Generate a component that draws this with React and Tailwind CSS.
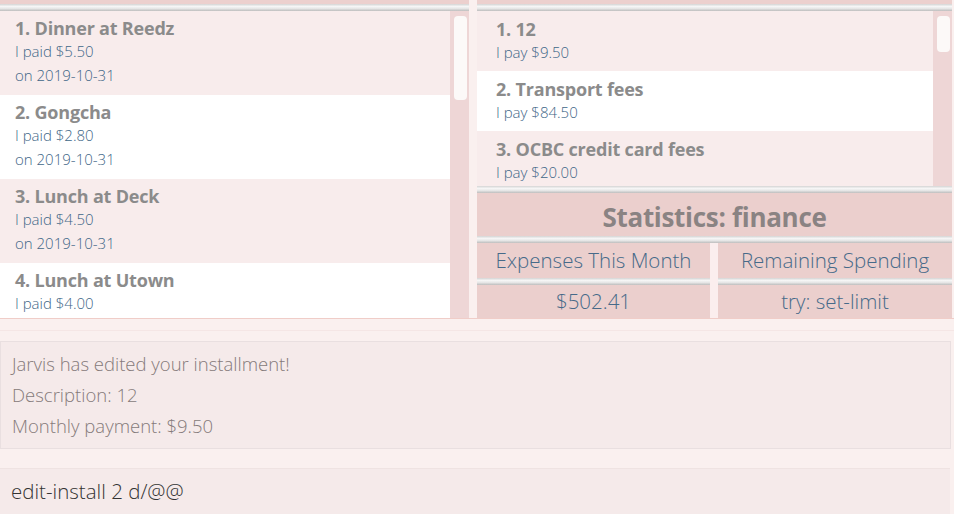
import React from "react";

const font = { fontFamily: '"Open Sans", "Noto Sans", sans-serif' };

function Sep() {
  return <div className="h-[7px] shrink-0 bg-[linear-gradient(to_bottom,#d4d4d4_0%,#f6f6f6_35%,#e6e6e6_65%,#bdbdbd_100%)]" />;
}

function LeftItem({ n, title, paid, date, white }) {
  return (
    <div className={`h-[84px] shrink-0 pl-[15px] pt-[6px] ${white ? "bg-white" : "bg-[#f8ecec]"}`}>
      <div className="text-[18px] leading-[22px] font-bold text-[#8b8b8b] tracking-[-0.2px]">{n}. {title}</div>
      <div className="text-[15px] leading-[24px] font-light text-[#3f6788]">I paid ${paid}</div>
      {date && <div className="text-[15px] leading-[24px] font-light text-[#3f6788]">on {date}</div>}
    </div>
  );
}

function RightItem({ n, title, pay, white }) {
  return (
    <div className={`h-[60px] shrink-0 pl-[19px] pt-[7px] ${white ? "bg-white" : "bg-[#f8ecec]"}`}>
      <div className="text-[18px] leading-[22px] font-bold text-[#8b8b8b] tracking-[-0.2px]">{n}. {title}</div>
      <div className="text-[15px] leading-[24px] font-light text-[#3f6788]">I pay ${pay}</div>
    </div>
  );
}

function Scrollbar({ thumbH }) {
  return (
    <div className="w-[19px] shrink-0 bg-[#eed6d6] pt-[5px] pl-[4px] pr-[2px]">
      <div className="bg-[#fcf9f8] rounded-[4px]" style={{ height: thumbH }} />
    </div>
  );
}

export default function App() {
  return (
    <div className="w-[954px] h-[514px] bg-[#faf0ef] flex flex-col overflow-hidden" style={font}>
      <div className="h-[319px] shrink-0 flex border-b border-[#f0cdc8]">
        {/* left panel */}
        <div className="w-[469px] shrink-0 flex flex-col">
          <div className="h-[4px] bg-[#ecd0ce]" />
          <Sep />
          <div className="flex-1 flex overflow-hidden">
            <div className="flex-1 flex flex-col overflow-hidden">
              <LeftItem n={1} title="Dinner at Reedz" paid="5.50" date="2019-10-31" />
              <LeftItem n={2} title="Gongcha" paid="2.80" date="2019-10-31" white />
              <LeftItem n={3} title="Lunch at Deck" paid="4.50" date="2019-10-31" />
              <LeftItem n={4} title="Lunch at Utown" paid="4.00" white />
            </div>
            <Scrollbar thumbH={84} />
          </div>
        </div>
        <div className="w-[8px] shrink-0" />
        {/* right panel */}
        <div className="w-[475px] shrink-0 flex flex-col">
          <div className="h-[4px] bg-[#ecd0ce]" />
          <Sep />
          <div className="h-[175px] shrink-0 flex overflow-hidden">
            <div className="flex-1 flex flex-col overflow-hidden">
              <RightItem n={1} title="12" pay="9.50" />
              <RightItem n={2} title="Transport fees" pay="84.50" white />
              <RightItem n={3} title="OCBC credit card fees" pay="20.00" />
            </div>
            <Scrollbar thumbH={36} />
          </div>
          <Sep />
          <div className="flex-1 flex flex-col bg-[#ebcfcd]">
            <div className="h-[43px] shrink-0 pt-[5px] flex items-center justify-center text-[26px] font-bold text-[#8a8383] tracking-[-0.3px]">
              Statistics: finance
            </div>
            <div className="flex-1 flex">
              <div className="flex-1 flex flex-col">
                <Sep />
                <div className="h-[35px] flex items-center justify-center text-[20.5px] font-light text-[#466a89]">Expenses This Month</div>
                <Sep />
                <div className="flex-1 flex items-center justify-center text-[20.5px] font-light text-[#466a89]">$502.41</div>
              </div>
              <div className="w-[8px] shrink-0 flex flex-col">
                <div className="h-[7px] bg-[linear-gradient(to_bottom,#d4d4d4_0%,#f6f6f6_35%,#e6e6e6_65%,#bdbdbd_100%)]" />
                <div className="flex-1 bg-[#fbeeee]" />
              </div>
              <div className="w-[234px] shrink-0 flex flex-col">
                <Sep />
                <div className="h-[35px] flex items-center justify-center text-[20.5px] font-light text-[#466a89]">Remaining Spending</div>
                <Sep />
                <div className="flex-1 flex items-center justify-center text-[20.5px] font-light text-[#466a89]">try: set-limit</div>
              </div>
            </div>
          </div>
        </div>
      </div>
      {/* bottom */}
      <div className="h-[12px] shrink-0 border-b border-[#f5e6e5]" />
      <div className="h-[10px] shrink-0" />
      <div className="h-[108px] shrink-0 w-[951px] bg-[#f5eaea] border border-[#e9dfe0] pl-[11px] pt-[6px]">
        <div className="text-[18.5px] leading-[31px] font-light text-[#857a7a]">Jarvis has edited your installment!</div>
        <div className="text-[18.5px] leading-[31px] font-light text-[#857a7a]">Description: 12</div>
        <div className="text-[18.5px] leading-[31px] font-light text-[#857a7a]">Monthly payment: $9.50</div>
      </div>
      <div className="h-[19px] shrink-0" />
      <div className="flex-1 w-[950px] bg-[#f5eaea] border-t border-[#efe3e2] pl-[11px] flex items-center">
        <div className="text-[20.5px] font-light text-[#333333]">edit-install 2 d/@@</div>
      </div>
    </div>
  );
}
